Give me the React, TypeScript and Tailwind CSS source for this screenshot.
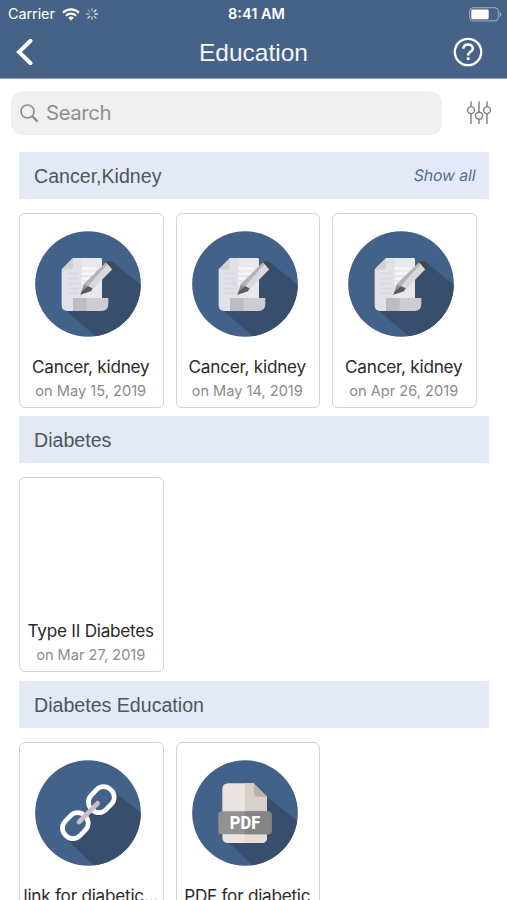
import React from "react";

type MaterialKind = "document" | "link" | "pdf" | "none";

interface Material {
  title: string;
  date?: string;
  kind: MaterialKind;
}

interface Section {
  name: string;
  showAll?: boolean;
  items: Material[];
}

const sections: Section[] = [
  {
    name: "Cancer,Kidney",
    showAll: true,
    items: [
      { title: "Cancer, kidney", date: "on May 15, 2019", kind: "document" },
      { title: "Cancer, kidney", date: "on May 14, 2019", kind: "document" },
      { title: "Cancer, kidney", date: "on Apr 26, 2019", kind: "document" },
    ],
  },
  {
    name: "Diabetes",
    items: [{ title: "Type II Diabetes", date: "on Mar 27, 2019", kind: "none" }],
  },
  {
    name: "Diabetes Education",
    items: [
      { title: "link for diabetic...", kind: "link" },
      { title: "PDF for diabetic", kind: "pdf" },
    ],
  },
];

function WifiIcon() {
  return (
    <svg width="18" height="13" viewBox="0 0 18 13" fill="none" stroke="white" strokeWidth="2.1">
      <path d="M1 4.7a11.4 11.4 0 0 1 16 0" />
      <path d="M3.9 7.7a7.3 7.3 0 0 1 10.2 0" />
      <path d="M9 12.6 6.2 9.8a4 4 0 0 1 5.6 0Z" fill="white" stroke="none" />
    </svg>
  );
}

function Spinner() {
  const opacities = [0.45, 0.9, 0.8, 0.7, 0.65, 0.85, 0.5, 0.35];
  return (
    <svg width="14" height="14" viewBox="-7 -7 14 14" stroke="white" strokeWidth="1.3" strokeLinecap="round">
      {opacities.map((o, i) => (
        <line key={i} x1="0" y1="-3" x2="0" y2="-5.6" opacity={o} transform={`rotate(${i * 45})`} />
      ))}
    </svg>
  );
}

function BatteryIcon() {
  return (
    <svg width="33" height="15" viewBox="0 0 33 15" fill="none">
      <rect x="0.7" y="0.7" width="28.6" height="13.2" rx="3.4" stroke="white" strokeOpacity="0.5" />
      <rect x="2.3" y="2.6" width="17.4" height="9.6" rx="1.4" fill="white" />
      <path d="M30.7 5v5c1.2-.5 1.6-1.4 1.6-2.5S31.9 5.5 30.7 5Z" fill="white" fillOpacity="0.5" />
    </svg>
  );
}

function HelpIcon() {
  return (
    <svg width="30" height="30" viewBox="0 0 30 30" fill="none" stroke="white">
      <circle cx="15" cy="15" r="13.2" strokeWidth="2.3" />
      <path d="M10.4 11.7c0-2.7 2-4.3 4.7-4.3s4.7 1.6 4.7 4c0 3.4-4.6 3.3-4.6 6.6v.4" strokeWidth="2.5" />
      <circle cx="15.2" cy="21.7" r="1.6" fill="white" stroke="none" />
    </svg>
  );
}

function FilterIcon() {
  return (
    <svg width="26" height="24" viewBox="0 0 26 24" fill="none" stroke="#7d7d7d" strokeWidth="1.4">
      <path d="M5 .5v5M5 12.7V23M13 .5v10.7M13 18.4V23M21 .5v5M21 12.7V23" />
      <circle cx="5" cy="9.1" r="3.5" />
      <circle cx="13" cy="14.8" r="3.5" />
      <circle cx="21" cy="9.1" r="3.5" />
    </svg>
  );
}

function DocumentArt({ clip }: { clip: string }) {
  return (
    <svg width="106" height="106" viewBox="76 78 318 318">
      <clipPath id={clip}>
        <circle cx="235" cy="237" r="158.5" />
      </clipPath>
      <g clipPath={`url(#${clip})`}>
        <rect x="76" y="78" width="318" height="318" fill="#436289" />
        <path d="M308 170 400 245V400H266L164 313Z" fill="#374f6c" />
      </g>
      {/* sheet, with the right part lit */}
      <path d="M190 159H271q6 0 6 6V318H173q-17 0-17-17V193Z" fill="#e1e1e8" />
      <path d="M216 159H271q6 0 6 6V282H216Z" fill="#e8e8ed" />
      <path d="M190 159V186q0 8-8 8H156Z" fill="#d0d0d7" />
      <path d="M174 206H208M174 221H208M174 236H208M174 251H208M174 265H208" stroke="#d8d8de" strokeWidth="5" />
      <path d="M216 190H258M216 206H258M216 221H244M216 236H234" stroke="#fafafc" strokeWidth="7" />
      {/* curled foot */}
      <path d="M190 279H296V297q0 21-21 21H190Z" fill="#cdcdd1" />
      <path d="M190 279H231V318H190Z" fill="#bcbcc2" />
      {/* pencil */}
      <path d="m289 172 10 9-62 65-18-6Z" fill="#b4b3b5" />
      <path d="m294 177 14 16-57 58-15-9Z" fill="#d9d9dc" />
      <path d="m222 240-10 29 14-10 11-15Z" fill="#8d8c8f" />
      <path d="m212 269 5-10 19-15 13 6-5 9Z" fill="#5c5a5b" />
      <path d="m289 172 5-3q4-2 9 0l10 6q3 3-1 10l-4 8Z" fill="#4a4747" />
    </svg>
  );
}

function LinkArt() {
  return (
    <svg width="106" height="106" viewBox="76 77 318 318">
      <clipPath id="disc-link">
        <circle cx="235" cy="236" r="158.5" />
      </clipPath>
      <g clipPath="url(#disc-link)">
        <rect x="76" y="77" width="318" height="318" fill="#436289" />
        <path d="M308 166 400 240V400H262L166 312 200 230 240 240Z" fill="#374f6c" />
      </g>
      <g fill="#436289" stroke="white" strokeWidth="14">
        <rect x="-41" y="-31" width="82" height="62" rx="29" transform="translate(197 274) rotate(-46)" />
        <rect x="-41" y="-31" width="82" height="62" rx="29" transform="translate(275 196) rotate(-46)" />
      </g>
      <path d="M208 263 264 207" stroke="#c9c1c1" strokeWidth="14" strokeLinecap="round" />
    </svg>
  );
}

function PdfArt() {
  return (
    <svg width="106" height="106" viewBox="81 77 318 318">
      <clipPath id="disc-pdf">
        <circle cx="240" cy="236" r="158.5" />
      </clipPath>
      <g clipPath="url(#disc-pdf)">
        <rect x="81" y="77" width="318" height="318" fill="#436289" />
        <path d="M265 146 305 186 400 262V400H268L164 299Z" fill="#374f6c" />
      </g>
      <path d="M190 147H266L306 187V308q0 18-18 18H190q-18 0-18-18V165q0-18 18-18Z" fill="#ece4de" />
      <path d="M239 147H266L306 187V308q0 18-18 18H239Z" fill="#d9d0ca" />
      <path d="M239 300H306V308q0 18-18 18H239Z" fill="#e6dcd7" />
      <path d="M266 147 306 187H278q-12 0-12-12Z" fill="#b9b1ad" />
      <rect x="160" y="231" width="160" height="69" rx="11" fill="#929292" />
      <path d="M239 231H309q11 0 11 11V289q0 11-11 11H239Z" fill="#848484" />
      <text
        x="240"
        y="285"
        textAnchor="middle"
        textLength="91"
        lengthAdjust="spacingAndGlyphs"
        fill="white"
        fontSize="55"
        fontWeight="800"
        fontFamily="Roboto, sans-serif"
      >
        PDF
      </text>
    </svg>
  );
}

function MaterialArt({ kind, id }: { kind: MaterialKind; id: string }) {
  if (kind === "document") return <DocumentArt clip={`disc-${id}`} />;
  if (kind === "link") return <LinkArt />;
  if (kind === "pdf") return <PdfArt />;
  return null;
}

function MaterialCard({ item, id }: { item: Material; id: string }) {
  return (
    <div className="flex h-[195px] w-[144.5px] shrink-0 flex-col items-center rounded-md border border-[#d3d3d3] bg-white pt-[17.5px]">
      <div className="h-[106px] w-[106px] -translate-x-[3px]">
        <MaterialArt kind={item.kind} id={id} />
      </div>
      <div className="mt-[18.5px] pr-px text-[17.2px] leading-[22px] tracking-[-0.26px] whitespace-nowrap text-[#2b2b2b]">
        {item.title}
      </div>
      {item.date && (
        <div className="mt-[3px] pr-px text-[14.6px] leading-5 whitespace-nowrap text-[#8b8b8b]">{item.date}</div>
      )}
    </div>
  );
}

function StatusBar() {
  return (
    <div className="grid h-7 grid-cols-3 items-center pr-[5px] pl-2 text-[14.5px] text-white">
      <div className="flex items-center">
        <span className="tracking-[-0.1px]">Carrier</span>
        <span className="ml-[7px]"><WifiIcon /></span>
        <span className="ml-[5px]"><Spinner /></span>
      </div>
      <span className="pl-[3px] text-center font-semibold">8:41 AM</span>
      <div className="flex justify-end"><BatteryIcon /></div>
    </div>
  );
}

export default function App() {
  return (
    <div className="h-[900px] w-[507px] overflow-hidden bg-white font-['Inter',sans-serif]">
      <header className="h-[79px] border-b border-[#8b9db5] bg-[#476287]">
        <StatusBar />
        <div className="flex h-12 items-center justify-between pr-6 pl-4">
          <button aria-label="Back" className="w-[30px]">
            <svg width="17" height="26" viewBox="0 0 17 26" fill="none" stroke="white" strokeWidth="4">
              <path d="M14.5 1.8 3 13l11.5 11.2" strokeLinecap="round" />
            </svg>
          </button>
          <h1 className="pt-[3px] pl-2 font-['Liberation_Sans',sans-serif] text-[24.5px] text-[#f3f6fa]">Education</h1>
          <button aria-label="Help"><HelpIcon /></button>
        </div>
      </header>

      <div className="flex items-center pt-3">
        <div className="ml-[11px] flex h-11 w-[431px] items-center rounded-xl bg-[#f0f0f0] pl-[9px]">
          <svg width="19" height="19" viewBox="0 0 19 19" fill="none" stroke="#8e8e93">
            <circle cx="7.5" cy="7.5" r="6.5" strokeWidth="1.6" />
            <path d="m12.3 12.3 5.3 5.3" strokeWidth="2.2" />
          </svg>
          <span className="ml-[7px] text-[20.3px] tracking-[-0.35px] text-[#8e8e93]">Search</span>
        </div>
        <button aria-label="Filter" className="ml-6"><FilterIcon /></button>
      </div>

      <main className="flex flex-col gap-[8.7px] pt-[16.5px] pr-[18.5px] pl-[19px]">
        {sections.map((section, s) => (
          <section key={section.name}>
            <div className="flex h-[47px] items-center justify-between bg-[#e3eaf5] pr-[13px] pl-[15px]">
              <h2 className="pt-[3px] font-['Liberation_Sans',sans-serif] text-[19.6px] text-[#4e5560]">{section.name}</h2>
              {section.showAll && (
                <a className="inline-block -skew-x-[10deg] pt-0.5 text-[15.8px] tracking-[-0.1px] text-[#566d92]">
                  Show all
                </a>
              )}
            </div>
            <div className="mt-[14px] flex gap-3">
              {section.items.map((item, i) => (
                <MaterialCard key={i} item={item} id={`${s}-${i}`} />
              ))}
            </div>
          </section>
        ))}
      </main>
    </div>
  );
}
